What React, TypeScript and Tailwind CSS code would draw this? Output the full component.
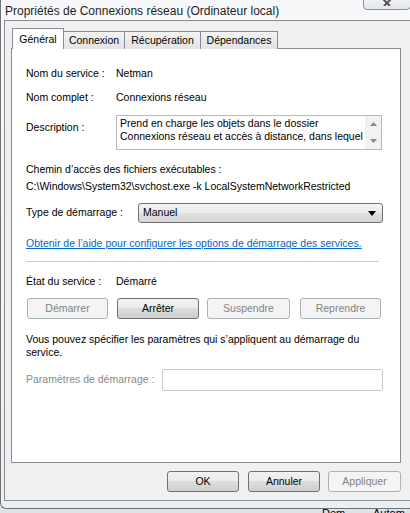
import React from "react";

const disabledBtn =
  "h-[21px] border border-[#adb2b5] rounded-[3px] bg-[#f4f4f4] text-[#838383] flex items-center justify-center text-[10.5px]";
const enabledBtn =
  "h-[21px] border border-[#707070] rounded-[3px] bg-[linear-gradient(#f2f2f2_0%,#ebebeb_50%,#dddddd_50%,#cfcfcf_100%)] text-black flex items-center justify-center text-[10.5px]";

export default function App() {
  return (
    <div
      className="relative w-[410px] h-[513px] overflow-hidden bg-[#dfe3e8] text-black"
      style={{ fontFamily: '"Liberation Sans", Arial, sans-serif' }}
    >
      {/* window frame */}
      <div className="w-[410px] h-[509px] bg-[linear-gradient(#f7f8fa,#eceff2)] border-b border-l border-[#6f7378] rounded-bl-[6px] flex flex-col">
        {/* title bar */}
        <div className="h-[20px] pl-[4px] flex items-center">
          <span className="text-[12px] text-[#1e1e1e] leading-[20px] pt-[2px]">
            Propriétés de Connexions réseau (Ordinateur local)
          </span>
        </div>
        {/* client area */}
        <div className="ml-[3px] w-[407px] h-[481px] border border-r-0 border-[#8a8d92] bg-[#f0f0f0] flex flex-col pl-[6px] pt-[7px]">
          {/* tabs */}
          <div className="flex items-end h-[21px] pl-[1px] relative z-10 text-[10.5px]">
            <div className="h-[21px] w-[52px] bg-white border border-b-0 border-[#898c95] flex items-start justify-center pt-[3px] leading-[14px]">
              Général
            </div>
            <div className="h-[18px] w-[61px] border border-l-0 border-b-0 border-[#898c95] bg-[linear-gradient(#f3f3f3,#e3e3e3)] flex items-center justify-center">
              Connexion
            </div>
            <div className="h-[18px] w-[76px] border border-l-0 border-b-0 border-[#898c95] bg-[linear-gradient(#f3f3f3,#e3e3e3)] flex items-center justify-center">
              Récupération
            </div>
            <div className="h-[18px] w-[77px] border border-l-0 border-b-0 border-[#898c95] bg-[linear-gradient(#f3f3f3,#e3e3e3)] flex items-center justify-center">
              Dépendances
            </div>
          </div>
          {/* tab panel */}
          <div className="w-[390px] h-[415px] bg-white border border-[#898c95] -mt-[1px] flex flex-col pl-[14px] text-[10.5px]">
            <div className="mt-[17px] h-[14px] leading-[14px] flex">
              <span className="w-[90px]">Nom du service :</span>
              <span>Netman</span>
            </div>
            <div className="mt-[10px] h-[14px] leading-[14px] flex">
              <span className="w-[90px]">Nom complet :</span>
              <span>Connexions réseau</span>
            </div>
            <div className="mt-[11px] h-[35px] flex">
              <span className="w-[90px] pt-[5px] leading-[14px]">Description :</span>
              <div className="w-[266px] h-[35px] border border-[#b5b8bd] flex">
                <div className="flex-1 pl-[3px] pt-[1px] leading-[13px] whitespace-nowrap overflow-hidden">
                  <div>Prend en charge les objets dans le dossier</div>
                  <div>Connexions réseau et accès à distance, dans lequel</div>
                </div>
                <div className="w-[16px] bg-[#f2f2f2] flex flex-col items-center justify-between py-[6px]">
                  <svg width="7" height="4" viewBox="0 0 7 4">
                    <path d="M0 4 L3.5 0 L7 4 Z" fill="#8a8a8a" />
                  </svg>
                  <svg width="7" height="4" viewBox="0 0 7 4">
                    <path d="M0 0 L3.5 4 L7 0 Z" fill="#8a8a8a" />
                  </svg>
                </div>
              </div>
            </div>
            <div className="mt-[12px] h-[14px] leading-[14px]">
              Chemin d’accès des fichiers exécutables :
            </div>
            <div className="mt-[3px] h-[14px] leading-[14px] whitespace-nowrap">
              C:\Windows\System32\svchost.exe -k LocalSystemNetworkRestricted
            </div>
            <div className="mt-[10px] h-[20px] flex items-center">
              <span className="w-[112px]">Type de démarrage :</span>
              <div className="w-[245px] h-[20px] border border-[#707070] rounded-[3px] bg-[linear-gradient(#f4f4f4_0%,#ececec_50%,#e1e1e1_50%,#d6d6d6_100%)] flex items-center pl-[4px] pr-[6px]">
                <span className="flex-1">Manuel</span>
                <svg width="8" height="5" viewBox="0 0 8 5">
                  <path d="M0 0 L8 0 L4 5 Z" fill="#000" />
                </svg>
              </div>
            </div>
            <div className="mt-[13px] h-[14px] leading-[14px] whitespace-nowrap">
              <span className="text-[#0066cc] underline">
                Obtenir de l’aide pour configurer les options de démarrage des services.
              </span>
            </div>
            <div className="mt-[11px] w-[353px] h-[1px] bg-[#c8c8c8]" />
            <div className="mt-[12px] h-[14px] leading-[14px] flex">
              <span className="w-[90px]">État du service :</span>
              <span>Démarré</span>
            </div>
            <div className="mt-[10px] flex pl-[1px]">
              <div className={disabledBtn + " w-[81px]"}>Démarrer</div>
              <div className={enabledBtn + " w-[82px] ml-[9px]"}>Arrêter</div>
              <div className={disabledBtn + " w-[83px] ml-[8px]"}>Suspendre</div>
              <div className={disabledBtn + " w-[81px] ml-[10px]"}>Reprendre</div>
            </div>
            <div className="mt-[14px] leading-[13px] w-[360px]">
              <div>Vous pouvez spécifier les paramètres qui s’appliquent au démarrage du</div>
              <div>service.</div>
            </div>
            <div className="mt-[10px] h-[22px] flex items-center">
              <span className="w-[136px] text-[#8a8a8a]">Paramètres de démarrage :</span>
              <div className="w-[221px] h-[22px] border border-[#c5c8cc] rounded-[2px] bg-white" />
            </div>
          </div>
          {/* footer buttons */}
          <div className="mt-[8px] flex pl-[156px]">
            <div className={enabledBtn + " w-[72px] h-[20px]"}>OK</div>
            <div className={enabledBtn + " w-[72px] h-[20px] ml-[9px]"}>Annuler</div>
            <div className={disabledBtn + " w-[73px] h-[20px] ml-[8px]"}>Appliquer</div>
          </div>
        </div>
      </div>
      {/* background text below window */}
      <div className="h-[4px] overflow-hidden relative">
        <span className="absolute left-[322px] top-[0px] text-[11px] leading-[11px] -mt-[1px]">Dem</span>
        <span className="absolute left-[373px] top-[0px] text-[11px] leading-[11px] -mt-[1px]">Autom</span>
      </div>
      {/* close button overlay */}
      <div className="absolute left-[363px] top-[-4px] w-[48px] h-[14px] border border-[#8e9297] rounded-b-[4px] bg-[linear-gradient(#f3f4f6,#e4e7ea)] flex items-end justify-center pb-[3px]">
        <svg width="12" height="8" viewBox="0 0 12 8">
          <path d="M1 0 L6 5 L11 0 M3 8 L6 5 L9 8" stroke="#555" strokeWidth="2" fill="none" />
        </svg>
      </div>
    </div>
  );
}
